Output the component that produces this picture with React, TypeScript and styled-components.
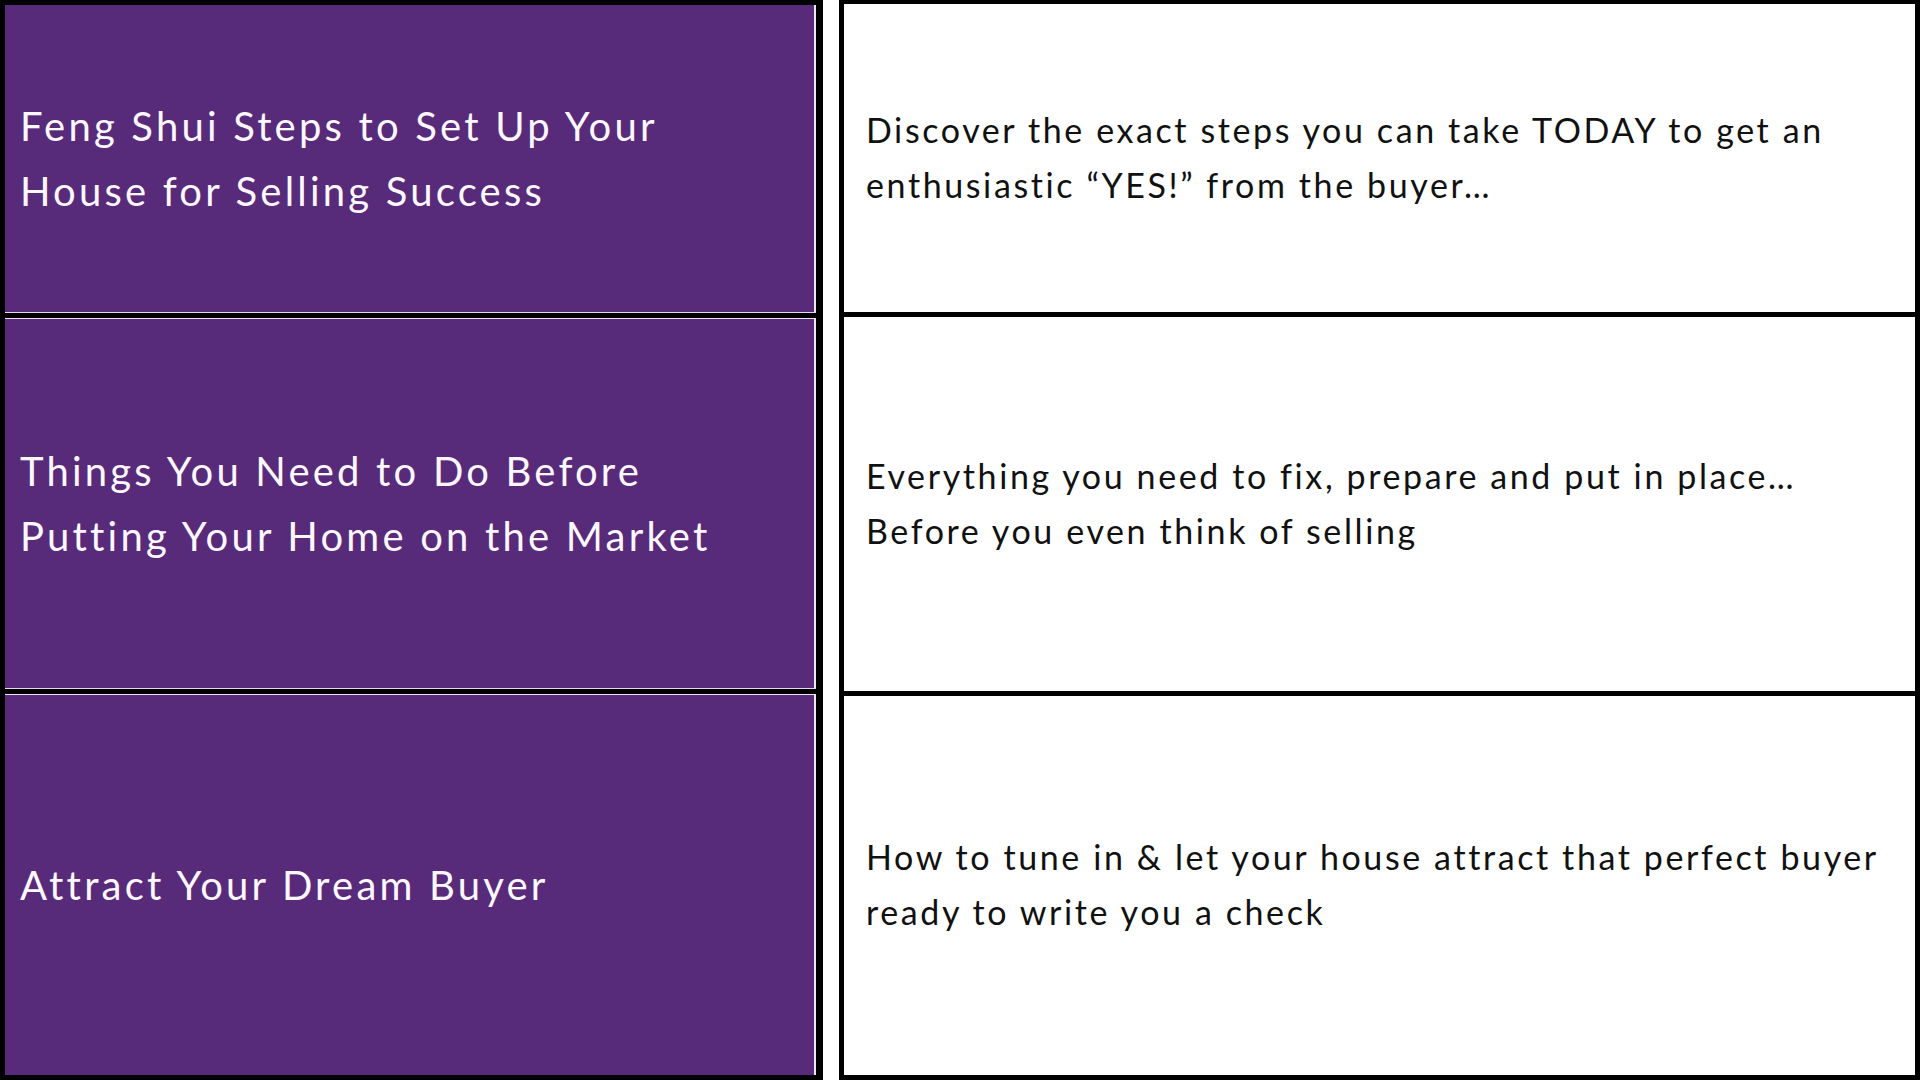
import React from 'react';
import styled, { createGlobalStyle } from 'styled-components';

type Module = {
  title: string;
  blurb: string[];
  titleHeight: number;
  blurbHeight: number;
};

const modules: Module[] = [
  {
    title: 'Feng Shui Steps to Set Up Your House for Selling Success',
    blurb: [
      'Discover the exact steps you can take TODAY to get an',
      'enthusiastic \u201cYES!\u201d from the buyer\u2026',
    ],
    titleHeight: 307,
    blurbHeight: 308,
  },
  {
    title: 'Things You Need to Do Before Putting Your Home on the Market',
    blurb: ['Everything you need to fix, prepare and put in place\u2026', 'Before you even think of selling'],
    titleHeight: 369,
    blurbHeight: 374,
  },
  {
    title: 'Attract Your Dream Buyer',
    blurb: ['How to tune in & let your house attract that perfect buyer', 'ready to write you a check'],
    titleHeight: 380,
    blurbHeight: 379,
  },
];

const GlobalStyle = createGlobalStyle`
  html, body {
    margin: 0;
    padding: 0;
    background: #fff;
  }
  body {
    font-family: 'Lato', 'Open Sans', sans-serif;
  }
`;

const Page = styled.div`
  display: flex;
  gap: 16px;
  width: 1920px;
  height: 1080px;
`;

const TitleColumn = styled.div`
  display: flex;
  flex-direction: column;
  flex: 0 0 823px;
  box-sizing: border-box;
  background: #000;
  border: 5px solid #000;
  border-right-width: 7px;
`;

const TitleCell = styled.div<{ $h: number }>`
  flex: 0 0 ${(p) => p.$h}px;
  box-sizing: border-box;
  display: flex;
  align-items: center;
  padding: 0 100px 0 15px;
  background: #582b7a;
  border-right: 2px solid #efe4f2;
  color: #fdf8ff;
  font-size: 40px;
  line-height: 65px;
  letter-spacing: 3.2px;
`;

const TitleDivider = styled.div`
  flex: 0 0 7px;
  box-sizing: border-box;
  background: #000;
  border-top: 1px solid #e6d8ea;
  border-bottom: 1px solid #efe4f2;
`;

const BlurbColumn = styled.div`
  display: flex;
  flex-direction: column;
  flex: 1 1 auto;
  box-sizing: border-box;
  border: 5px solid #000;
  border-top-width: 4px;
`;

const BlurbCell = styled.div<{ $h: number }>`
  flex: 0 0 ${(p) => p.$h}px;
  box-sizing: border-box;
  display: flex;
  flex-direction: column;
  justify-content: center;
  padding: 0 22px 3px;
  color: #111;
  font-size: 34px;
  line-height: 55px;
  letter-spacing: 2.6px;
  white-space: nowrap;
`;

const BlurbDivider = styled.div`
  flex: 0 0 5px;
  background: #000;
`;

const App = () => {
  return (
    <>
      <GlobalStyle />
      <Page>
        <TitleColumn>
          {modules.map((m, i) => (
            <React.Fragment key={m.title}>
              {i > 0 && <TitleDivider />}
              <TitleCell $h={m.titleHeight}>{m.title}</TitleCell>
            </React.Fragment>
          ))}
        </TitleColumn>
        <BlurbColumn>
          {modules.map((m, i) => (
            <React.Fragment key={m.title}>
              {i > 0 && <BlurbDivider />}
              <BlurbCell $h={m.blurbHeight}>
                {m.blurb.map((line) => (
                  <div key={line}>{line}</div>
                ))}
              </BlurbCell>
            </React.Fragment>
          ))}
        </BlurbColumn>
      </Page>
    </>
  );
};

export default App;
